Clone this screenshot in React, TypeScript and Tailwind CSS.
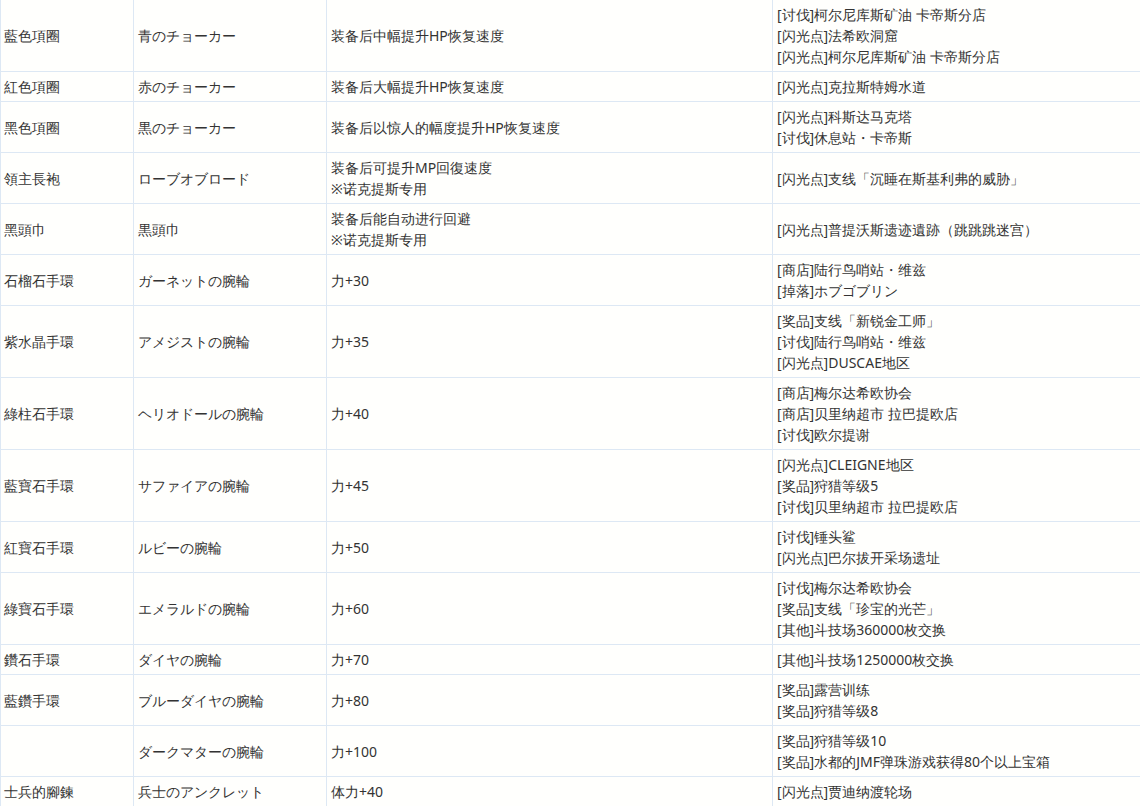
const rows: [string, string, string[], string[]][] = [
  ["藍色項圈", "青のチョーカー", ["装备后中幅提升HP恢复速度"], ["[讨伐]柯尔尼库斯矿油 卡帝斯分店", "[闪光点]法希欧洞窟", "[闪光点]柯尔尼库斯矿油 卡帝斯分店"]],
  ["紅色項圈", "赤のチョーカー", ["装备后大幅提升HP恢复速度"], ["[闪光点]克拉斯特姆水道"]],
  ["黑色項圈", "黒のチョーカー", ["装备后以惊人的幅度提升HP恢复速度"], ["[闪光点]科斯达马克塔", "[讨伐]休息站・卡帝斯"]],
  ["領主長袍", "ローブオブロード", ["装备后可提升MP回復速度", "※诺克提斯专用"], ["[闪光点]支线「沉睡在斯基利弗的威胁」"]],
  ["黑頭巾", "黒頭巾", ["装备后能自动进行回避", "※诺克提斯专用"], ["[闪光点]普提沃斯遗迹遺跡（跳跳跳迷宫）"]],
  ["石榴石手環", "ガーネットの腕輪", ["力+30"], ["[商店]陆行鸟哨站・维兹", "[掉落]ホブゴブリン"]],
  ["紫水晶手環", "アメジストの腕輪", ["力+35"], ["[奖品]支线「新锐金工师」", "[讨伐]陆行鸟哨站・维兹", "[闪光点]DUSCAE地区"]],
  ["綠柱石手環", "ヘリオドールの腕輪", ["力+40"], ["[商店]梅尔达希欧协会", "[商店]贝里纳超市 拉巴提欧店", "[讨伐]欧尔提谢"]],
  ["藍寶石手環", "サファイアの腕輪", ["力+45"], ["[闪光点]CLEIGNE地区", "[奖品]狩猎等级5", "[讨伐]贝里纳超市 拉巴提欧店"]],
  ["紅寶石手環", "ルビーの腕輪", ["力+50"], ["[讨伐]锤头鲨", "[闪光点]巴尔拔开采场遗址"]],
  ["綠寶石手環", "エメラルドの腕輪", ["力+60"], ["[讨伐]梅尔达希欧协会", "[奖品]支线「珍宝的光芒」", "[其他]斗技场360000枚交换"]],
  ["鑽石手環", "ダイヤの腕輪", ["力+70"], ["[其他]斗技场1250000枚交换"]],
  ["藍鑽手環", "ブルーダイヤの腕輪", ["力+80"], ["[奖品]露营训练", "[奖品]狩猎等级8"]],
  ["", "ダークマターの腕輪", ["力+100"], ["[奖品]狩猎等级10", "[奖品]水都的JMF弹珠游戏获得80个以上宝箱"]],
  ["士兵的腳鍊", "兵士のアンクレット", ["体力+40"], ["[闪光点]贾迪纳渡轮场"]],
];

function Lines({ items }: { items: string[] }) {
  return (
    <>
      {items.map((t, i) => (
        <div key={i}>{t}</div>
      ))}
    </>
  );
}

export default function App() {
  return (
    <div className="w-[1140px] h-[806px] overflow-hidden bg-[#fffffd] text-[#333] text-sm leading-[21px] font-['SimSun','Noto_Sans_CJK_SC',sans-serif]">
      <table className="w-[1141px] border-collapse table-fixed -mt-[1px]">
        <colgroup>
          <col className="w-[133px]" />
          <col className="w-[193px]" />
          <col className="w-[446px]" />
          <col className="w-[369px]" />
        </colgroup>
        <tbody>
          {rows.map((r, i) => (
            <tr key={i}>
              <td className="border border-[#dde8f4] px-[3px] py-[4px] align-middle">{r[0]}</td>
              <td className="border border-[#dde8f4] px-[4px] py-[4px] align-middle">{r[1]}</td>
              <td className="border border-[#dde8f4] px-[4px] py-[4px] align-middle">
                <Lines items={r[2]} />
              </td>
              <td className="border border-[#dde8f4] px-[4px] py-[4px] align-middle">
                <Lines items={r[3]} />
              </td>
            </tr>
          ))}
        </tbody>
      </table>
    </div>
  );
}
